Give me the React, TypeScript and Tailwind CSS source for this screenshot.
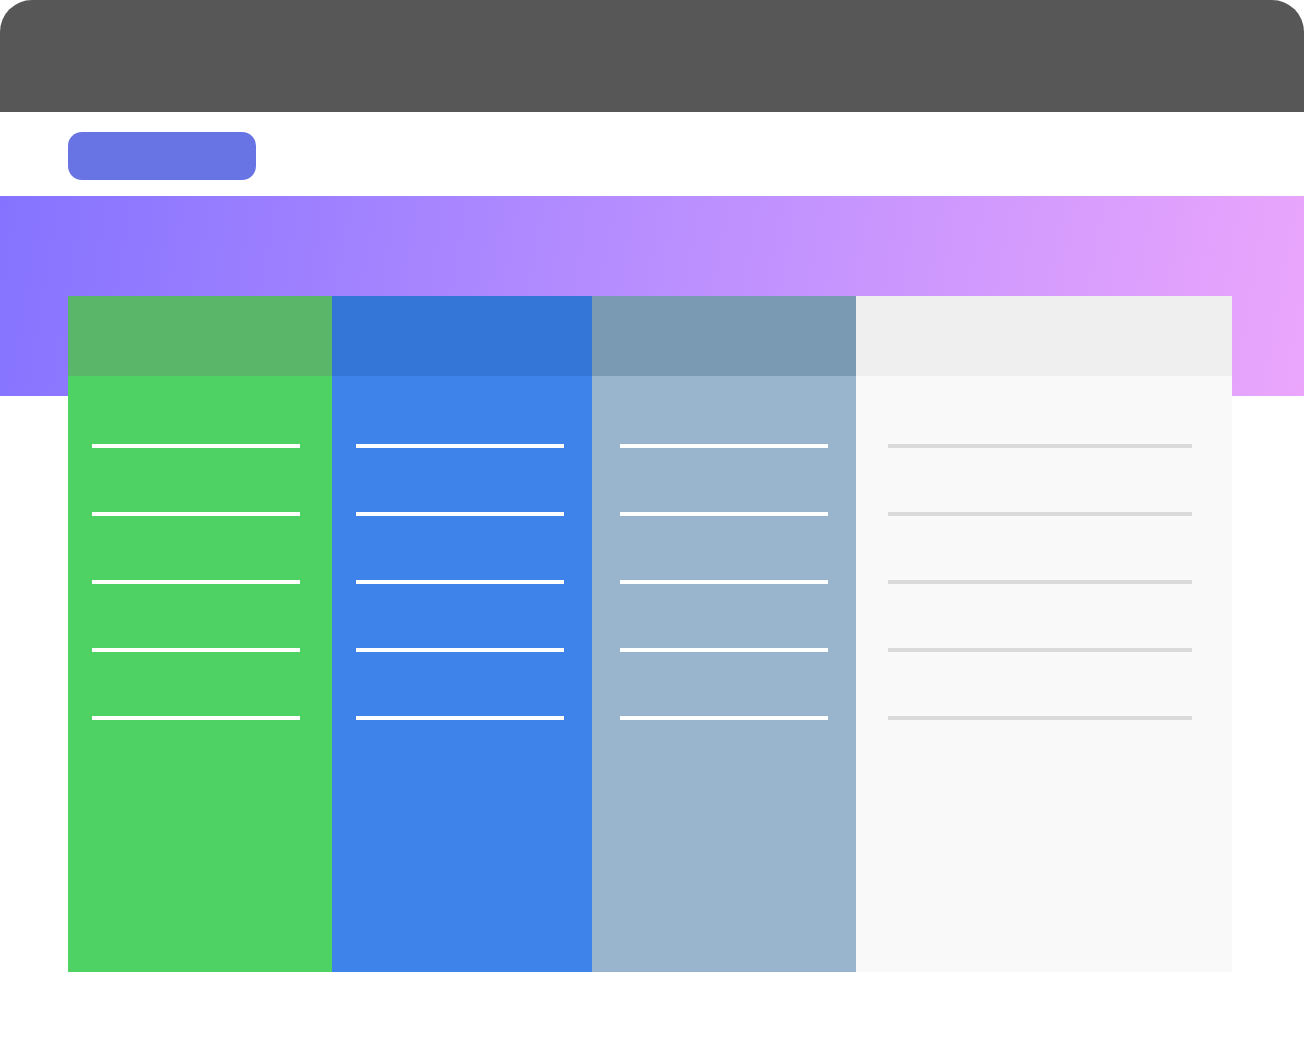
import React from 'react';

type Lane = {
  head: string;
  body: string;
  line: string;
  width: string;
  pad: string;
  lineWidth: string;
};

const lanes: Lane[] = [
  { head: 'bg-[#5ab76a]', body: 'bg-[#4ed264]', line: 'bg-white', width: 'w-[264px]', pad: 'pl-6', lineWidth: 'w-[208px]' },
  { head: 'bg-[#3475d8]', body: 'bg-[#3e83ea]', line: 'bg-white', width: 'w-[260px]', pad: 'pl-6', lineWidth: 'w-[208px]' },
  { head: 'bg-[#7a9ab3]', body: 'bg-[#99b4cd]', line: 'bg-white', width: 'w-[264px]', pad: 'pl-7', lineWidth: 'w-[208px]' },
  { head: 'bg-[#efefef]', body: 'bg-[#f9f9f9]', line: 'bg-[#dadada]', width: 'w-[376px]', pad: 'pl-8', lineWidth: 'w-[304px]' },
];

const rows = [0, 1, 2, 3, 4];

const Column: React.FC<{ lane: Lane }> = ({ lane }) => (
  <div className={`${lane.width} flex flex-col`}>
    <div className={`h-20 ${lane.head}`} />
    <div className={`h-[596px] flex flex-col gap-16 pt-[68px] ${lane.pad} ${lane.body}`}>
      {rows.map(i => (
        <div key={i} className={`h-1 ${lane.lineWidth} ${lane.line}`} />
      ))}
    </div>
  </div>
);

export default function App() {
  return (
    <div className="w-[1304px] h-[1048px] bg-white overflow-hidden">
      <div className="h-[112px] bg-[#575757] rounded-t-[32px]" />
      <div className="h-[84px] pt-5 pl-[68px]">
        <div className="w-[188px] h-12 rounded-[14px] bg-[#6874e4]" />
      </div>
      <div className="pt-[100px] bg-[linear-gradient(100deg,#8573ff,#b48cff_45%,#eba6fc)] bg-no-repeat bg-[length:100%_200px]">
        <div className="flex pl-[68px]">
          {lanes.map((lane, i) => (
            <Column key={i} lane={lane} />
          ))}
        </div>
      </div>
    </div>
  );
}
